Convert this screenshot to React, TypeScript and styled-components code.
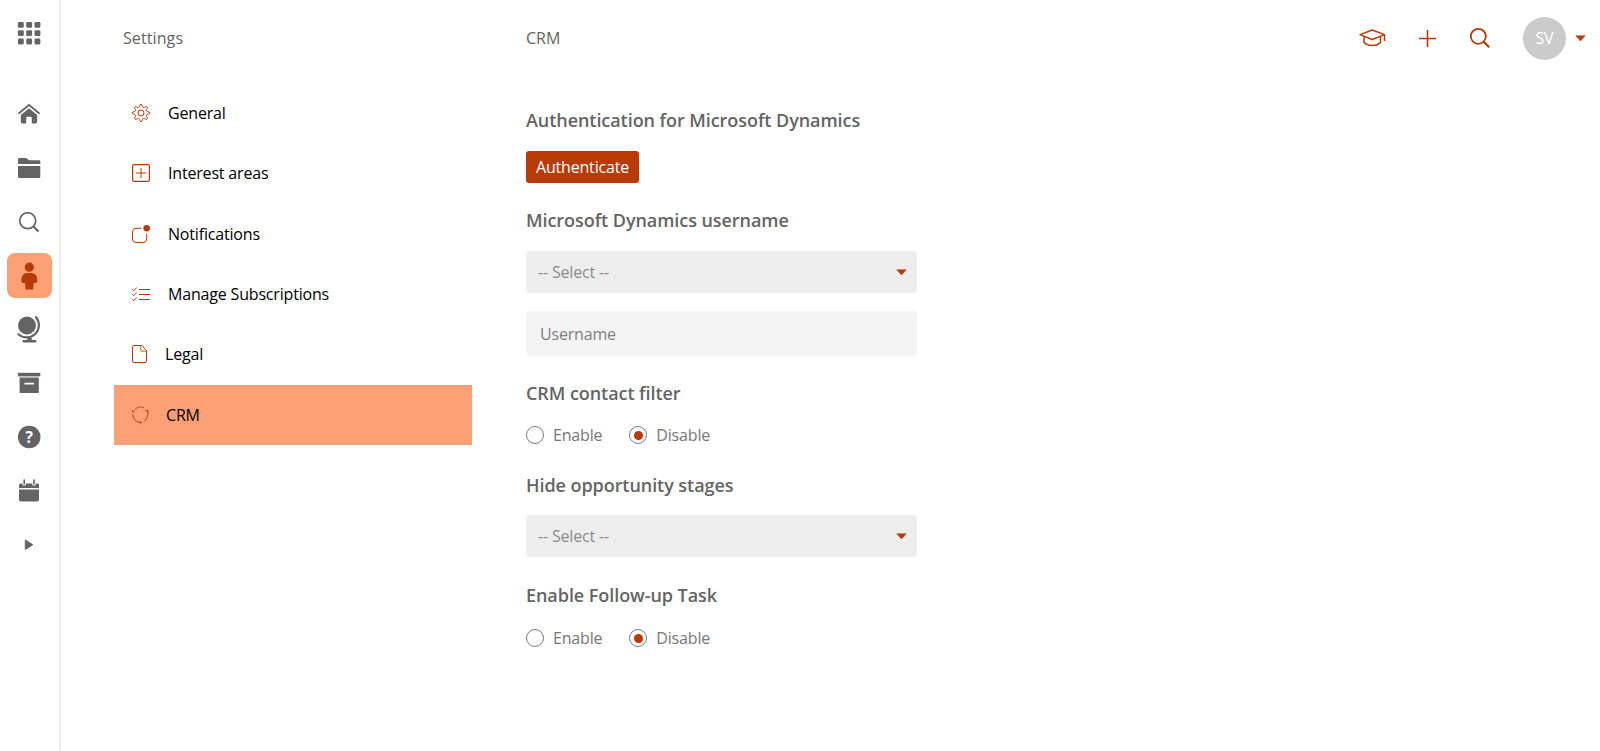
import { ReactNode, useState } from "react";
import styled, { createGlobalStyle } from "styled-components";

const GlobalStyle = createGlobalStyle`
  :root {
    --accent: #b83b05;
    --peach: #fda076;
    --gray: #646464;
  }
  * {
    box-sizing: border-box;
  }
  body {
    margin: 0;
    background-color: #fff;
    font-family: "Open Sans", "Noto Sans", sans-serif;
    font-size: 16px;
    letter-spacing: -0.18px;
    color: var(--gray);
  }
`;

const Page = styled.div`
  display: flex;
  height: 751px;
  overflow: hidden;
`;

const Rail = styled.nav`
  display: flex;
  flex-direction: column;
  flex: none;
  width: 61px;
  border-right: 2px solid #ededed;
`;

const AppsSlot = styled.div`
  height: 87.3px;
  padding: 21px 0 0 17px;
`;

const RailSlot = styled.div`
  display: flex;
  align-items: center;
  justify-content: center;
  width: 58px;
  height: 53.8px;
`;

const RailTile = styled.div<{ $active?: boolean }>`
  display: flex;
  align-items: center;
  justify-content: center;
  width: 45px;
  height: 45px;
  border-radius: 8px;
  background-color: ${(props) => (props.$active ? "var(--peach)" : "transparent")};
  color: ${(props) => (props.$active ? "var(--accent)" : "var(--gray)")};
`;

const Icon = styled.svg`
  display: block;
  flex: none;
  overflow: visible;
`;

const SettingsPanel = styled.aside`
  flex: none;
  width: 465px;
`;

const PanelTitle = styled.h1`
  margin: 0;
  padding-left: 62px;
  height: 82.6px;
  line-height: 76px;
  font-size: 16px;
  font-weight: 500;
  letter-spacing: 0.1px;
`;

const Menu = styled.ul`
  list-style: none;
  margin: 0 0 0 53px;
  padding: 0;
  width: 358px;
`;

const MenuItem = styled.li<{ $active: boolean }>`
  display: flex;
  align-items: center;
  gap: 18px;
  height: 60.4px;
  padding-left: 18px;
  color: #000;
  cursor: pointer;
  background-color: ${(props) => (props.$active ? "var(--peach)" : "transparent")};
  svg {
    color: var(--accent);
  }
`;

const Content = styled.main`
  flex: 1;
`;

const TopBar = styled.header`
  display: flex;
  align-items: center;
  height: 76px;
  padding-right: 14px;
`;

const TopTitle = styled.h2`
  flex: 1;
  margin: 0;
  font-size: 16px;
  font-weight: 500;
  letter-spacing: 0;
`;

const Actions = styled.div`
  display: flex;
  align-items: center;
  color: var(--accent);
`;

const Action = styled.span<{ $gap: number }>`
  margin-right: ${(props) => props.$gap}px;
`;

const Avatar = styled.div`
  width: 43px;
  height: 43px;
  margin-right: 9px;
  border-radius: 50%;
  background-color: #cbcbcb;
  color: #fff;
  line-height: 43px;
  text-align: center;
`;

const Form = styled.div`
  display: flex;
  flex-direction: column;
  align-items: flex-start;
  width: 391px;
  padding-top: 32px;
`;

const Label = styled.h3<{ $top?: number; $bottom: number }>`
  margin: ${(props) => props.$top ?? 0}px 0 ${(props) => props.$bottom}px;
  font-size: 18px;
  font-weight: 600;
  line-height: 24px;
  letter-spacing: -0.06px;
  white-space: nowrap;
`;

const AuthButton = styled.button`
  width: 113px;
  height: 32px;
  padding: 0;
  border: none;
  border-radius: 3px;
  background-color: var(--accent);
  color: #fff;
  font: inherit;
  letter-spacing: inherit;
`;

const SelectBox = styled.div`
  display: flex;
  align-items: center;
  justify-content: space-between;
  width: 391px;
  height: 42px;
  padding: 0 10px 0 12px;
  border-radius: 4px;
  background-color: #ededed;
  color: #8b8b8b;
  svg {
    color: var(--accent);
  }
`;

const TextInput = styled.input`
  width: 391px;
  height: 45px;
  margin-top: 18px;
  padding: 0 14px;
  border: none;
  border-radius: 4px;
  background-color: #f4f4f4;
  font: inherit;
  letter-spacing: inherit;
  &::placeholder {
    color: #808080;
  }
`;

const RadioRow = styled.div`
  display: flex;
  gap: 27px;
`;

const RadioOption = styled.div`
  display: flex;
  align-items: center;
  gap: 9px;
  height: 22px;
  color: #777;
  cursor: pointer;
`;

const RadioMark = styled.span<{ $checked: boolean }>`
  display: flex;
  align-items: center;
  justify-content: center;
  width: 18px;
  height: 18px;
  border: 1px solid #7b7b7b;
  border-radius: 50%;
  &::after {
    content: "";
    width: 9px;
    height: 9px;
    border-radius: 50%;
    background-color: ${(props) => (props.$checked ? "var(--accent)" : "transparent")};
  }
`;

const Solid = ({ h = 24, children }: { h?: number; children: ReactNode }) => (
  <Icon width="24" height={h} viewBox={`0 0 24 ${h}`} fill="currentColor">
    {children}
  </Icon>
);

const Outline = ({
  w,
  h,
  stroke = 1,
  children,
}: {
  w: number;
  h: number;
  stroke?: number;
  children: ReactNode;
}) => (
  <Icon
    width={w}
    height={h}
    viewBox={`0 0 ${w} ${h}`}
    fill="none"
    stroke="currentColor"
    strokeWidth={stroke}
  >
    {children}
  </Icon>
);

const Caret = () => (
  <Icon width="11" height="7" viewBox="0 0 11 7" fill="currentColor">
    <path d="M.8.8h9.4L5.5 6z" stroke="currentColor" strokeWidth="0.6" strokeLinejoin="round" />
  </Icon>
);

const AppsIcon = () => (
  <Solid>
    {[0.9, 9.2, 17.5].map((y) =>
      [0.9, 9.2, 17.5].map((x) => (
        <rect key={`${x}-${y}`} x={x} y={y} width="5.9" height="5.9" rx="1.4" />
      ))
    )}
  </Solid>
);

const railIcons = [
  {
    name: "home",
    icon: (
      <Solid>
        <path
          d="M2 11.2 12 3l10 8.2"
          fill="none"
          stroke="currentColor"
          strokeWidth="1.8"
          strokeLinecap="round"
        />
        <path d="M12 6.2 20.2 13v6.8q0 1.7-1.7 1.7h-3.7V16q0-1.2-1.2-1.2h-3.2Q9.2 14.8 9.2 16v5.5H5.5q-1.7 0-1.7-1.7V13z" />
      </Solid>
    ),
  },
  {
    name: "files",
    icon: (
      <Solid>
        <path d="M1 7.9V3.2Q1 2 2.2 2h6.6q.7 0 1.2.5L12 4.3h10q1.3 0 1.3 1.3v2.3z" />
        <path d="M1 9.9h22.3v10.8q0 1.3-1.3 1.3H2.3Q1 22 1 20.7z" />
      </Solid>
    ),
  },
  {
    name: "search",
    icon: (
      <Outline w={24} h={24} stroke={1.7}>
        <circle cx="10.7" cy="10.7" r="8" />
        <path d="M16.5 16.5l5 5" strokeWidth="2.2" />
      </Outline>
    ),
  },
  {
    name: "profile",
    active: true,
    icon: (
      <Solid h={28}>
        <circle cx="12.3" cy="5.2" r="4.6" />
        <path d="M9.8 11.1h5Q20.3 12 20.3 18v1.2q0 1.7-1.6 1.7h-2l-.6 6.5H8.6L8 20.9H6q-1.700 0-1.700-1.700V18q0-6 5.500-6.900z" />
      </Solid>
    ),
  },
  {
    name: "globe",
    icon: (
      <Solid h={28}>
        <circle cx="10" cy="10.5" r="9" />
        <path
          d="M19 2.2A12.3 12.3 0 0 1 1.4 19.3"
          fill="none"
          stroke="currentColor"
          strokeWidth="2.2"
          strokeLinecap="round"
        />
        <path d="M10.300 22.500h4.400v2.500h3.800q.9 0 .9 1.200t-.9 1.200h-12q-.9 0-.9-1.200t.9-1.200h3.800z" />
      </Solid>
    ),
  },
  {
    name: "archive",
    icon: (
      <Solid>
        <path d="M1 1.8h22.3v3.6H1z" />
        <path d="M2.6 6.5h19.2V22H2.6zM7.500 11.800v1.800h9.500v-1.800z" fillRule="evenodd" />
      </Solid>
    ),
  },
  {
    name: "help",
    icon: (
      <Solid>
        <circle cx="12.2" cy="12" r="11.3" />
        <text
          x="12.2"
          y="17.5"
          fill="#fff"
          fontFamily="Open Sans"
          fontSize="15.5"
          fontWeight="700"
          textAnchor="middle"
        >
          ?
        </text>
      </Solid>
    ),
  },
  {
    name: "calendar",
    icon: (
      <Solid>
        <path d="M2 8.900V6q0-1.600 1.600-1.600h1.600q.3 2.400 2 2.400t2-2.400h5.800q.3 2.400 2 2.400t2-2.400h1.600Q22 4.400 22 6v2.900z" />
        <path d="M2 10.600h20v10q0 2-2 2H4q-2 0-2-2z" />
        <path d="M7.200 1v4M17 1v4" stroke="currentColor" strokeWidth="1.6" strokeLinecap="round" />
      </Solid>
    ),
  },
  {
    name: "expand",
    icon: (
      <Solid>
        <path d="M8.300 6.900v9.600L15.700 11.700z" stroke="currentColor" strokeLinejoin="round" />
      </Solid>
    ),
  },
];

const menuItems = [
  {
    label: "General",
    icon: (
      <Outline w={18} h={18}>
        <circle cx="9" cy="9" r="3" />
        <path
          d="M7.700 1.700Q7.800.5 9 .5t1.300 1.200l.1.700q.2 1 1.100 1.200.7.200 1.300-.3l.5-.4q.9-.7 1.700.1t.1 1.700l-.4.500q-.5.600-.3 1.300.2.900 1.200 1.100l.7.100q1.200.1 1.200 1.300t-1.200 1.300l-.7.100q-1 .2-1.200 1.100-.2.700.3 1.300l.4.500q.7.900-.1 1.700t-1.700.1l-.5-.4q-.6-.5-1.300-.3-.9.200-1.100 1.200l-.1.700Q10.200 17.500 9 17.500t-1.300-1.200l-.1-.7q-.2-1-1.100-1.200-.7-.2-1.300.3l-.5.400q-.9.700-1.700-.1t-.1-1.700l.4-.5q.5-.6.3-1.300-.2-.9-1.200-1.100l-.7-.1Q.5 10.200.5 9t1.200-1.300l.7-.1q1-.2 1.200-1.100.2-.7-.3-1.300l-.4-.5q-.7-.9.1-1.700t1.700-.1l.5.400q.6.500 1.300.3.900-.2 1.100-1.200z"
        />
      </Outline>
    ),
  },
  {
    label: "Interest areas",
    icon: (
      <Outline w={18} h={18} stroke={1.2}>
        <rect x=".6" y=".6" width="16.8" height="16.8" rx="1.5" />
        <path d="M9 3.800v10.400M3.800 9h10.400" strokeWidth="1" />
      </Outline>
    ),
  },
  {
    label: "Notifications",
    icon: (
      <Outline w={18} h={18}>
        <path d="M9.500 3.300H4Q.5 3.300.5 6.800V14q0 3.500 3.500 3.500h7.200q3.500 0 3.500-3.500V8.700" />
        <circle cx="14.700" cy="3.300" r="3.300" fill="currentColor" stroke="none" />
      </Outline>
    ),
  },
  {
    label: "Manage Subscriptions",
    icon: (
      <Outline w={18} h={14}>
        <path d="M7 2.500h11M7 7.500h11M7 12.500h11" />
        <path d="M.3 2.200l1.500 1.500L4.800.5M.3 7.200l1.500 1.500 3-3.200M.3 12.200l1.500 1.500 3-3.200" />
      </Outline>
    ),
  },
  {
    label: "Legal",
    icon: (
      <Outline w={15} h={18}>
        <path d="M2 .5h7.800l4.700 5V16q0 1.500-1.500 1.500H2Q.5 17.500.5 16V2Q.5.5 2 .5z" />
        <path d="M8.700.7v4.500q0 1 1 1h4.600" strokeWidth=".8" />
      </Outline>
    ),
  },
  {
    label: "CRM",
    icon: (
      <Outline w={16} h={18} stroke={0.9}>
        <path d="M2.400 4.300Q6.200-.9 12.200 1.800M15.600 5Q17 11.200 12.200 15.200M9.200 16.600Q2.200 17 .6 8.200" />
        <path d="M.4 4.100l.3 2 2.100-.5M13 4.700l2.700-.5.4 2.300M7.500 15l1.700 1.600-1.500 1.400" />
      </Outline>
    ),
  },
];

const Select = () => (
  <SelectBox>
    <span>-- Select --</span>
    <Caret />
  </SelectBox>
);

const EnableRadio = () => {
  const [value, setValue] = useState("Disable");

  return (
    <RadioRow>
      {["Enable", "Disable"].map((option) => (
        <RadioOption key={option} onClick={() => setValue(option)}>
          <RadioMark $checked={value === option} />
          {option}
        </RadioOption>
      ))}
    </RadioRow>
  );
};

const App = () => {
  const [currentMenu, setCurrentMenu] = useState("CRM");

  return (
    <Page>
      <GlobalStyle />
      <Rail>
        <AppsSlot>
          <AppsIcon />
        </AppsSlot>
        {railIcons.map((item) => (
          <RailSlot key={item.name}>
            <RailTile $active={item.active}>{item.icon}</RailTile>
          </RailSlot>
        ))}
      </Rail>
      <SettingsPanel>
        <PanelTitle>Settings</PanelTitle>
        <Menu>
          {menuItems.map((item) => (
            <MenuItem
              key={item.label}
              $active={currentMenu === item.label}
              onClick={() => setCurrentMenu(item.label)}
            >
              {item.icon}
              {item.label}
            </MenuItem>
          ))}
        </Menu>
      </SettingsPanel>
      <Content>
        <TopBar>
          <TopTitle>CRM</TopTitle>
          <Actions>
            <Action $gap={33}>
              <Outline w={27} h={18} stroke={1.5}>
                <path d="M1 5.600 13.300 1l12.200 4.600-12.200 4.900z" strokeLinejoin="round" />
                <path d="M5 7.500v5.800q2.500 3.200 8.300 3.200t8.200-3.200V7.500M25.500 5.600v6.300" />
              </Outline>
            </Action>
            <Action $gap={34}>
              <Outline w={17} h={17} stroke={1.6}>
                <path d="M8.500 0v17M0 8.500h17" />
              </Outline>
            </Action>
            <Action $gap={33}>
              <Outline w={20} h={20} stroke={1.8}>
                <circle cx="8.300" cy="8.300" r="7.500" />
                <path d="M13.700 13.700l5.500 5.500" strokeWidth="2.2" />
              </Outline>
            </Action>
            <Avatar>SV</Avatar>
            <Caret />
          </Actions>
        </TopBar>
        <Form>
          <Label $bottom={19}>Authentication for Microsoft Dynamics</Label>
          <AuthButton>Authenticate</AuthButton>
          <Label $top={25} $bottom={19}>
            Microsoft Dynamics username
          </Label>
          <Select />
          <TextInput placeholder="Username" />
          <Label $top={25} $bottom={19}>
            CRM contact filter
          </Label>
          <EnableRadio />
          <Label $top={27} $bottom={18}>
            Hide opportunity stages
          </Label>
          <Select />
          <Label $top={26} $bottom={20}>
            Enable Follow-up Task
          </Label>
          <EnableRadio />
        </Form>
      </Content>
    </Page>
  );
};

export default App;
